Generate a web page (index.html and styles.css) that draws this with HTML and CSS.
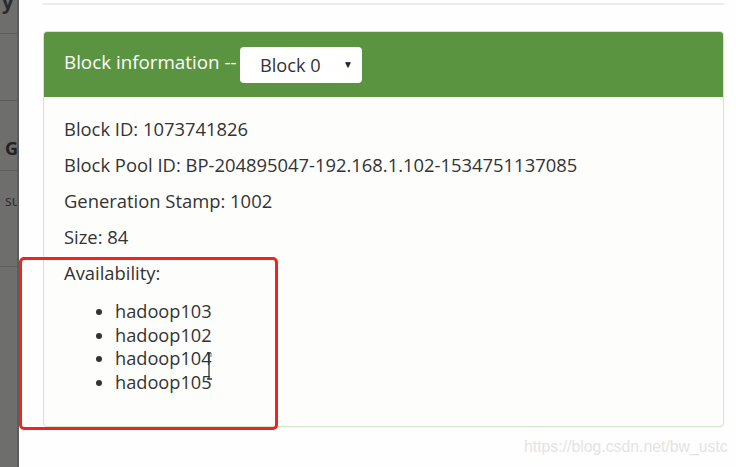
FILE: index.html
```html
<!DOCTYPE html>
<html>
<head>
<meta charset="utf-8">
<link rel="stylesheet" href="styles.css">
</head>
<body>
<div class="page">
  <aside class="backdrop">
    <div class="bd-row bd-top"><span class="bd-y">y</span></div>
    <div class="bd-row bd-r2"></div>
    <div class="bd-row bd-r4"><span class="bd-g">G</span></div>
    <div class="bd-row bd-r5"><span class="bd-su">su</span></div>
    <div class="bd-rest"></div>
  </aside>
  <main class="modal">
    <div class="modal-head"></div>
    <section class="panel">
      <header class="panel-heading">
        <span class="panel-title">Block information --</span>
        <div class="select"><span>Block 0</span><span class="caret">&#9660;</span></div>
      </header>
      <div class="panel-body">
        <p>Block ID: 1073741826</p>
        <p>Block Pool ID: BP-204895047-192.168.1.102-1534751137085</p>
        <p>Generation Stamp: 1002</p>
        <p>Size: 84</p>
        <p>Availability:</p>
        <ul class="hosts">
          <li>hadoop103</li>
          <li>hadoop102</li>
          <li>hadoop104</li>
          <li>hadoop105</li>
        </ul>
      </div>
    </section>
  </main>
</div>
<div class="highlight"></div>
<svg class="ibeam" width="8" height="28" viewBox="0 0 8 28"><path d="M1 1h2v26H1M3 1h2M3 27h3" stroke="#333" stroke-width="1.3" fill="none"/><path d="M5 1v4" stroke="#6aa8d8" stroke-width="1.5"/></svg>
<div class="watermark">https://blog.csdn.net/bw_ustc</div>
</body>
</html>
```
FILE: styles.css
```css
html, body { margin: 0; padding: 0; }
body {
  width: 736px;
  height: 467px;
  overflow: hidden;
  position: relative;
  background: #fefefe;
  font-family: "Open Sans", "Segoe UI", sans-serif;
  color: #333;
}
.page { display: flex; height: 467px; }
.backdrop {
  width: 17px;
  background: #6e6e6d;
  border-right: 2px solid #5c5c5b;
  display: flex;
  flex-direction: column;
  overflow: hidden;
}
.bd-row { border-bottom: 1px solid #5d5d5c; position: relative; }
.bd-top { height: 33px; }
.bd-r2 { height: 66px; }
.bd-r4 { height: 69px; display: flex; align-items: center; }
.bd-r5 { height: 95px; }
.bd-rest { flex: 1; }
.bd-y { position: absolute; left: 2px; top: -12px; font: bold 20px "Open Sans", sans-serif; color: #2a2a2a; }
.bd-g { font: bold 18px "Open Sans", sans-serif; color: #222; margin-left: 5px; margin-top: 24px; }
.bd-su { display: block; font: 14px "Open Sans", sans-serif; color: #2c2c2c; margin: 20px 0 0 5px; }

.modal {
  flex: 1;
  background: #fefefe;
  padding: 0 12px 0 24px;
}
.modal-head {
  height: 3px;
  border-bottom: 2px solid #ececec;
  margin-bottom: 26px;
}
.panel {
  border: 1px solid #d3e6c6;
  border-radius: 4px;
  height: 394px;
  background: #fdfefc;
  box-shadow: 0 1px 1px rgba(0,0,0,0.04);
}
.panel-heading {
  background: #5b9440;
  height: 65px;
  border-radius: 3px 3px 0 0;
  display: flex;
  align-items: center;
  padding: 0 20px;
}
.panel-title { color: #fff; font-size: 18.8px; margin-top: -5px; width: 171px; white-space: nowrap; margin-right: 5px; }
.select {
  width: 122px;
  height: 36px;
  box-sizing: border-box;
  background: #fff;
  border-radius: 4px;
  display: flex;
  align-items: center;
  justify-content: space-between;
  padding: 0 9px 0 20px;
  font-size: 18.2px;
  color: #333;
}
.caret { font-size: 10px; color: #222; margin-top: -2px; }
.panel-body { padding: 19px 20px; }
.panel-body p { margin: 0 0 10px; font-size: 18.4px; line-height: 26px; }
.hosts { margin: 14px 0 0; padding-left: 51px; font-size: 18.2px; line-height: 23.6px; }

.highlight {
  position: absolute;
  left: 19px;
  top: 257px;
  width: 259px;
  height: 173px;
  box-sizing: border-box;
  border: 3px solid #f52020;
  border-radius: 5px;
}
.ibeam { position: absolute; left: 206px; top: 352px; }
.watermark {
  position: absolute;
  left: 524px;
  top: 438px;
  font: 15.8px "Liberation Sans", Arial, sans-serif;
  color: #e4e4e4;
}
```
